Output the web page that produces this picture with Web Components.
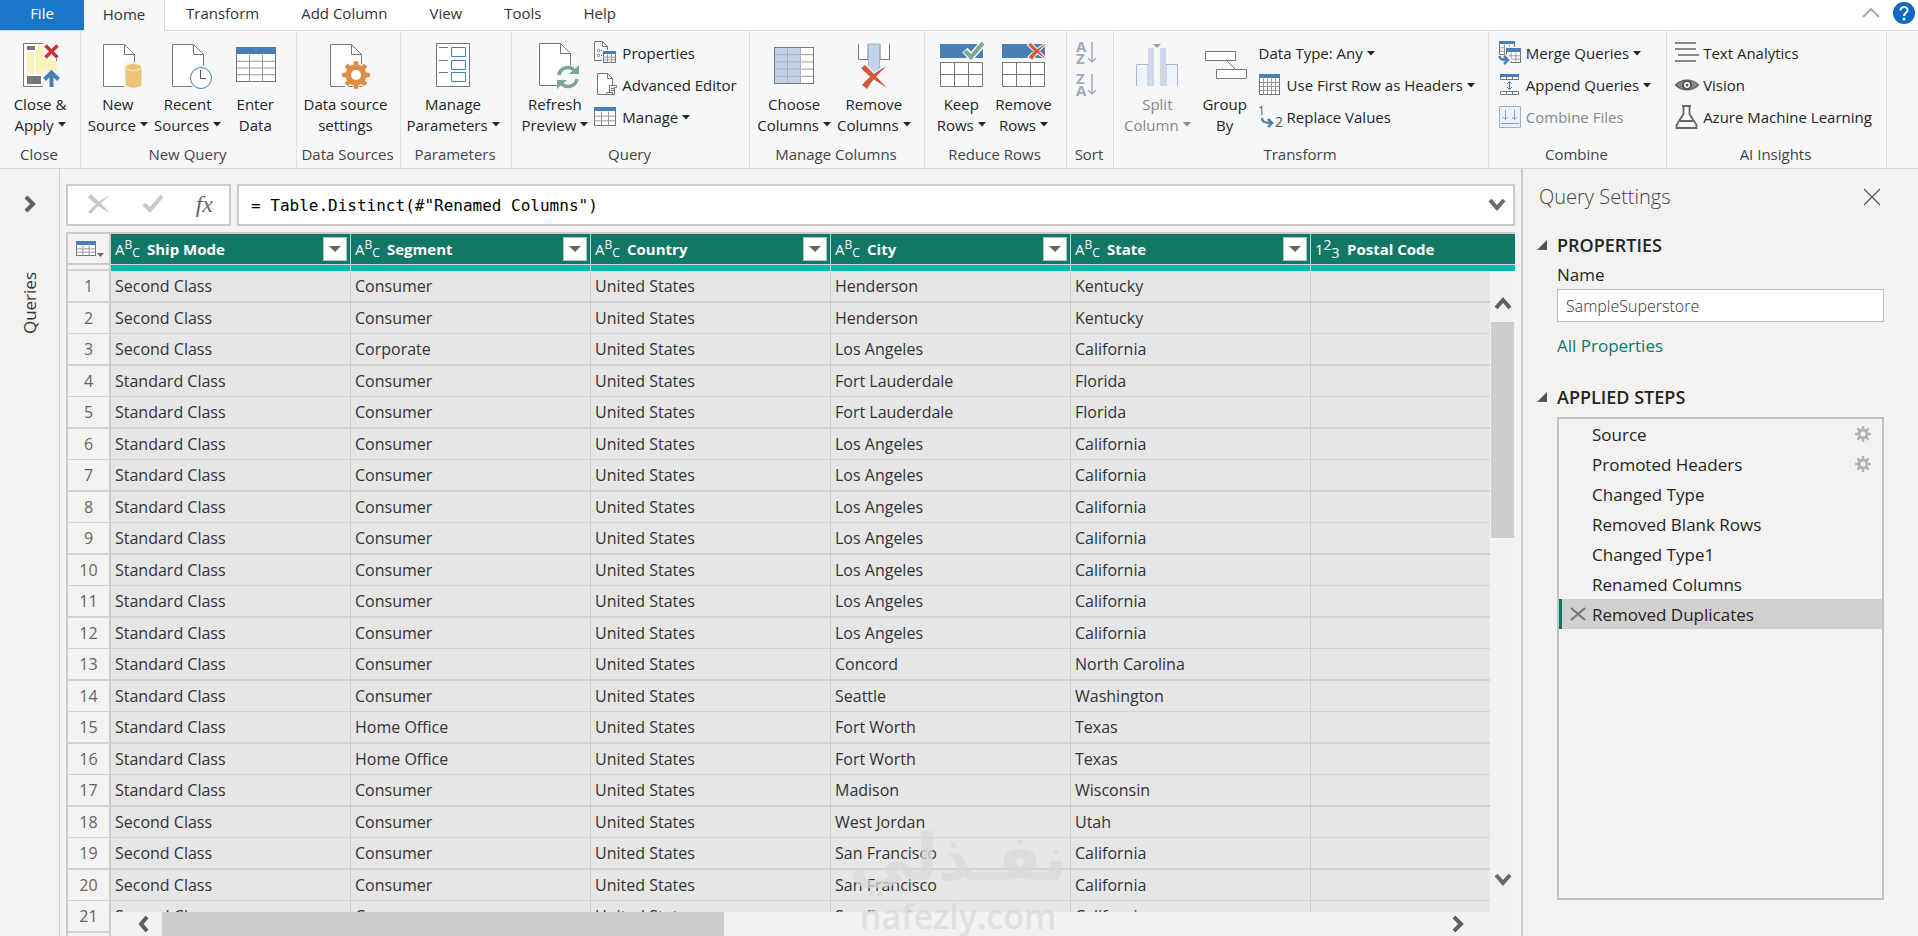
<!DOCTYPE html>
<html lang="en">
<head>
<meta charset="utf-8">
<title>Power Query Editor</title>
<style>
  html, body {
    margin: 0;
    height: 100%;
  }
  body {
    overflow: hidden;
    background: #f3f2f1;
    color: #252423;
    font-family: "Open Sans", "Noto Sans", sans-serif;
    font-size: 15px;
  }
</style>
</head>
<body>
<pq-app></pq-app>

<script>
const BLUE = '#4a7fb5';
const GREY = '#777';

// page with a folded corner
function page(x, y, w = 31, h = 42, f = 10) {
  return `<path d="M${x} ${y}h${w - f}l${f} ${f}v${h - f}h-${w}z" fill="#fff" stroke="${GREY}"/>
    <path d="M${x + w - f} ${y}v${f}h${f}" fill="none" stroke="${GREY}"/>`;
}

function grid(x, y, w, h, cols, rows, head = 0, fill = '#fff', line = '#999') {
  let d = '';
  for (let i = 1; i < cols; i++) d += `M${x + w * i / cols} ${y + head}v${h - head}`;
  for (let i = 1; i < rows; i++) d += `M${x} ${y + head + (h - head) * i / rows}h${w}`;
  return `<rect x="${x}" y="${y}" width="${w}" height="${h}" fill="${fill}"/>
    <path d="${d}" stroke="${line}" fill="none"/>
    <rect x="${x}" y="${y}" width="${w}" height="${h}" fill="none" stroke="${GREY}"/>
    ${head ? `<rect x="${x - .5}" y="${y - .5}" width="${w + 1}" height="${head}" fill="${BLUE}"/>` : ''}`;
}

function gear(cx, cy, outer, inner, teeth, hole, color, bg) {
  const pts = [];
  const step = Math.PI * 2 / teeth;
  for (let i = 0; i < teeth; i++) {
    [[-.31, inner], [-.19, outer], [.19, outer], [.31, inner]].forEach(([k, r]) => {
      const a = (i + k) * step - Math.PI / 2;
      pts.push((cx + r * Math.cos(a)).toFixed(1) + ',' + (cy + r * Math.sin(a)).toFixed(1));
    });
  }
  return `<polygon points="${pts.join(' ')}" fill="${color}"/><circle cx="${cx}" cy="${cy}" r="${hole}" fill="${bg}"/>`;
}

const BRUSH_X = (x, y, s, halo) => `<g transform="translate(${x} ${y}) scale(${s})">
  <path d="M0 3L4 0C9 5 17 13 26 23C17 17 8 12 0 3zM1 20C8 12 16 6 26 1C18 8 11 15 6 24z" fill="#d4593a"
    stroke="${halo}" stroke-width="3" paint-order="stroke"/></g>`;

const SORT = (a, b) => `<text x="0" y="11" font-size="15" font-weight="700" fill="#a0a9be">${a}</text>
  <text x="0" y="23" font-size="15" font-weight="700" fill="#a0a9be">${b}</text>
  <path d="M16 1v20M12 17l4 4 4-4" stroke="#a0a9be" stroke-width="1.5" fill="none"/>`;

// [width, height, markup]
const ICONS = {
  closeApply: [48, 46, `
    <path d="M40.500 17v8M28 1.500H7.500v43H27" fill="none" stroke="${GREY}"/>
    <rect x="8" y="2" width="32" height="42" fill="#fff"/>
    <rect x="11" y="4" width="8" height="4" fill="${GREY}"/>
    <path d="M11 10h7v22h-7zM20 4h9l7 15h5v9l-8 4H20z" fill="#fdf2b8"/>
    <rect x="11" y="34" width="14" height="8" fill="${GREY}"/>
    <path d="M27 0h16v17H27zM27 29h16v17H27z" fill="#f5f7f9"/>
    <path d="M29.500 3.500l12 12M41.500 3.500l-12 12" stroke="#c9352f" stroke-width="3.500"/>
    <path d="M35.500 45V31M28.500 37.500l7-7 7 7" fill="none" stroke="${BLUE}" stroke-width="4"/>`],
  newSource: [48, 46, page(9.5, 2.5) + `
    <path d="M30 20h19v26H30z" fill="#f5f7f9"/>
    <path d="M31.500 25v17c0 5 16 5 16 0V25z" fill="#eac577"/>
    <ellipse cx="39.500" cy="25" rx="8" ry="3.500" fill="#eac577" stroke="#fbf1da"/>`],
  recent: [48, 46, page(8.5, 2.5) + `
    <circle cx="37" cy="36" r="12.500" fill="#f5f7f9"/>
    <circle cx="37" cy="36" r="10.500" fill="#fff" stroke="${BLUE}"/>
    <path d="M36.500 28v8.500H42" fill="none" stroke="#555"/>`],
  table: [48, 46, grid(5.5, 5.5, 39, 34, 3, 4, 7)],
  dataSource: [48, 46, page(8.5, 2.5) + gear(34, 33, 16, 12, 8, 5, '#f5f7f9', '#f5f7f9') +
    gear(34, 33, 14, 10.5, 8, 5, '#e08c45', '#fff')],
  params: [48, 46, `
    <rect x="7.500" y="1.500" width="33" height="43" fill="#fff" stroke="${GREY}"/>
    <path d="M10 5.500h9M10 18.500h9M10 30.500h9" stroke="${GREY}"/>
    <path d="M22.500 5.500h14v9h-14zM22.500 18.500h14v9h-14zM22.500 30.500h14v9h-14z" fill="#fff" stroke="${BLUE}"/>`],
  refresh: [48, 46, page(8.5, 1.5) + `
    <circle cx="37" cy="35" r="12" fill="#f5f7f9"/>
    <path d="M28 33a9 9 0 0 1 16-4M46 37a9 9 0 0 1-16 4" fill="none" stroke="#7aa893" stroke-width="3.500"/>
    <path d="M48 23v9h-10zM26 47v-9h10z" fill="#7aa893"/>`],
  chooseCols: [48, 46, grid(4.5, 5.5, 39, 36, 3, 5) + '<path d="M5 6h26v35H5z" fill="#a9bfdb" opacity=".7"/>'],
  removeCols: [48, 46, `
    <path d="M8.500 2v15.500H18V2M30 2v15.500h9.500V2" fill="#fff" stroke="${GREY}"/>
    <path d="M18.500 2h11v28h-11z" fill="#c5d3e8" stroke="#a3b6cf"/>` + BRUSH_X(11, 23, 1, '#f5f7f9')],
  keepRows: [48, 46, `<path d="M3 2h43v14H3z" fill="${BLUE}"/>` + grid(3.5, 20.5, 42, 24, 3, 2, 0, '#fff', GREY) + `
    <path d="M28 8l6 7L46 1" fill="none" stroke="#f5f7f9" stroke-width="7"/>
    <path d="M28 9l6 6L46 1" fill="none" stroke="#7aa893" stroke-width="4"/>`],
  removeRows: [48, 46, `<path d="M3 2h43v14H3z" fill="${BLUE}"/>` + grid(3.5, 20.5, 42, 24, 3, 2, 0, '#fff', GREY) +
    BRUSH_X(29, 1, .7, '#f5f7f9')],
  splitCol: [48, 46, `
    <path d="M3.500 44V22.500H15V44M33 44V22.500h11.500V44" fill="#eef4fc" stroke="#a9b8d0"/>
    <path d="M15 6h6v38h-6zM27 6h6v38h-6z" fill="#cdd7e9"/>
    <path d="M20 2h8l-4 4z" fill="#9aa3b3"/>`],
  groupBy: [48, 46, `
    <path d="M26 19l8 8" stroke="${GREY}"/>
    <path d="M4.500 9.500h30v9h-30zM15.500 27.500h30v9h-30z" fill="#fff" stroke="${GREY}"/>`],
  properties: [24, 24, page(.5, .5, 13, 19, 5) + `
    <circle cx="4.500" cy="9.500" r="1.200" fill="none" stroke="${GREY}"/><circle cx="4.500" cy="14.500" r="1.200" fill="none" stroke="${GREY}"/>
    <path d="M7 9.500h1M7 14.500h1" stroke="${GREY}"/><path d="M8 9h15v14H8z" fill="#f5f7f9"/>` + grid(9.5, 10.5, 12, 11, 3, 3, 3)],
  advanced: [24, 24, page(3.5, .5, 15, 21, 5) + `
    <path d="M13 12h10v12H13z" fill="#f5f7f9"/>
    <path d="M15.500 19.500v-7h7v2h-2v7h-8v-2h6v2M17 15.500h3M17 17.500h3" fill="none" stroke="${GREY}"/>`],
  manage: [24, 24, grid(.5, 2.5, 21, 18, 3, 3, 4)],
  sortAsc: [22, 24, SORT('A', 'Z')],
  sortDesc: [22, 24, SORT('Z', 'A')],
  firstRow: [24, 24, grid(.5, 1.5, 20, 20, 5, 4, 4) + '<path d="M4.500 1v4M8.500 1v4M12.500 1v4M16.500 1v4" stroke="#777"/>'],
  replace: [24, 24, `
    <text x="-1" y="10" font-size="12" fill="#555">1</text><text x="16" y="22" font-size="14" fill="#555">2</text>
    <path d="M3 13c0 4 3 5 9 5M9 14l4 4-4 4" fill="none" stroke="${BLUE}" stroke-width="2.500"/>`],
  merge: [24, 24, grid(1.5, .5, 15, 13, 3, 3, 3) + '<path d="M7 6h17v17H7z" fill="#f5f7f9"/>' + grid(8.5, 7.5, 14, 14, 3, 3, 4) + `
    <path d="M2 14c0 4 3 5 8 5M7 15l4 4-4 4" fill="none" stroke="#f5f7f9" stroke-width="5"/>
    <path d="M1.500 15c0 3 3 4 8 4M6 15l4 4-4 4" fill="none" stroke="${BLUE}" stroke-width="2.500"/>`],
  append: [24, 24, `
    <path d="M2.500 1.500h18v5h-18zM8.500 4v3M14.500 4v3" fill="#fff" stroke="${GREY}"/>
    <path d="M2 1h19v3H2z" fill="${BLUE}"/>
    <path d="M2.500 18.500h18v3h-18zM8.500 18v3M14.500 18v3" fill="#fff" stroke="${GREY}"/>
    <path d="M11.500 9v7M9 11l2.500-2.500L14 11M9 14l2.500 2.500L14 14" fill="none" stroke="${BLUE}"/>`],
  combine: [24, 24, `
    <path d="M1.500 1.500h21v21h-21z" fill="#e9f1fb" stroke="#9fb0cb"/>
    <path d="M3 18.500h18M7.500 5v9M5 12l2.500 2.500L10 12M16.500 5v9M14 12l2.500 2.500L19 12" fill="none" stroke="#8d9db8"/>`],
  text: [24, 24, '<path d="M0 2h21M0 8h21M3 14h21M0 20h21" stroke="#666" stroke-width="1.500"/>'],
  vision: [24, 24, `
    <path d="M1 12C7 6 17 6 23 12C17 18 7 18 1 12z" fill="#fff" stroke="#666" stroke-width="2"/>
    <path d="M2 12l6-4v8zM22 12l-6-4v8z" fill="#888"/>
    <circle cx="12" cy="12" r="4" fill="#fff" stroke="#555" stroke-width="2"/><circle cx="12" cy="12" r="1.500" fill="#555"/>`],
  flask: [24, 24, `
    <path d="M7 1h9M8.500 1v8L1.500 20v3h20v-3L14.500 9V1M5 16h13" fill="none" stroke="#666" stroke-width="1.800"/>`],
  caret: [8, 5, '<path d="M0 0h8L4 4.500z" fill="currentColor"/>'],
  drop: [12, 6, '<path d="M0 0h12L6 6z" fill="currentColor"/>'],
  help: [22, 22, `<circle cx="11" cy="11" r="11" fill="#0e68c4"/>
    <path d="M7.500 8.500C7.500 3.500 15 4 14.500 8.500C14 11 11 11 11 14" fill="none" stroke="#fff" stroke-width="2"/>
    <circle cx="11" cy="17" r="1.500" fill="#fff"/>`],
  collapse: [18, 10, '<path d="M1 9l8-8 8 8" fill="none" stroke="#aaa" stroke-width="2"/>'],
  right: [12, 16, '<path d="M2 1l7 7-7 7" fill="none" stroke="#5f5f5f" stroke-width="4"/>'],
  left: [12, 16, '<path d="M10 1L4 8l6 7" fill="none" stroke="#5f5f5f" stroke-width="4"/>'],
  down: [18, 14, '<path d="M2 2l7 8 7-8" fill="none" stroke="#6a6a6a" stroke-width="4"/>'],
  up: [18, 14, '<path d="M2 12l7-8 7 8" fill="none" stroke="#5f5f5f" stroke-width="4"/>'],
  cancel: [24, 20, '<path d="M1 3l3-3C10 6 16 11 23 19C14 14 7 10 1 3zM1 18C8 10 15 5 23 1C16 7 9 13 4 20z" fill="#c8c8c8"/>'],
  check: [22, 18, '<path d="M2 9l6 6L20 1" fill="none" stroke="#c8c8c8" stroke-width="4"/>'],
  close: [16, 16, '<path d="M0 0l16 16M16 0L0 16" stroke="#555" stroke-width="1.200"/>'],
  remove: [16, 16, '<path d="M1 2l14 12M15 2L1 14" stroke="#777" stroke-width="2.200"/>'],
  gear: [16, 16, gear(8, 8, 8, 5.5, 8, 2.5, '#b3b3b3', '#f3f2f1')],
  expanded: [10, 10, '<path d="M10 0v10H0z" fill="#555"/>'],
  corner: [28, 20, grid(.5, 2.5, 19, 14, 3, 3, 4) + '<path d="M21 14h7l-3.500 4z" fill="#666"/>'],
};

class PqIcon extends HTMLElement {
  connectedCallback() {
    const [w, h, body] = ICONS[this.getAttribute('name')];
    this.attachShadow({mode: 'open'}).innerHTML = `
      <style>
        :host { display: inline-block; flex: none; line-height: 0; }
        svg { display: block; overflow: visible; }
      </style>
      <svg width="${w}" height="${h}" viewBox="0 0 ${w} ${h}" aria-hidden="true">${body}</svg>`;
  }
}
customElements.define('pq-icon', PqIcon);

// Large ribbon button: icon on top, two lines of text
class PqBigButton extends HTMLElement {
  connectedCallback() {
    const caret = this.hasAttribute('menu') ? '<pq-icon class="caret" name="caret"></pq-icon>' : '';
    this.attachShadow({mode: 'open'}).innerHTML = `
      <style>
        :host { display: block; padding-top: 11px; }
        button {
          display: flex; flex-direction: column; align-items: center; gap: 6px;
          min-width: 62px; padding: 0 3px; border: 0; background: none;
          font: inherit; line-height: 21px; color: #252423; white-space: nowrap;
        }
        :host([disabled]) button { color: #8a8886; }
        .caret { margin-left: 4px; vertical-align: 4px; }
      </style>
      <button type="button" ${this.hasAttribute('disabled') ? 'disabled' : ''}>
        <pq-icon name="${this.getAttribute('icon')}"></pq-icon>
        <span><slot></slot>${caret}</span>
      </button>`;
  }
}
customElements.define('pq-big-button', PqBigButton);

class PqSmallButton extends HTMLElement {
  connectedCallback() {
    const icon = this.getAttribute('icon');
    this.attachShadow({mode: 'open'}).innerHTML = `
      <style>
        :host { display: block; }
        button {
          display: flex; align-items: center; gap: 4px; height: 32px;
          padding: 0; border: 0; background: none;
          font: inherit; color: #252423; white-space: nowrap;
        }
        :host([disabled]) button { color: #8a8886; }
      </style>
      <button type="button" ${this.hasAttribute('disabled') ? 'disabled' : ''} aria-label="${this.getAttribute('label') || this.textContent}">
        ${icon ? `<pq-icon name="${icon}"></pq-icon>` : ''}
        <slot></slot>
        ${this.hasAttribute('menu') ? '<pq-icon name="caret"></pq-icon>' : ''}
      </button>`;
  }
}
customElements.define('pq-small-button', PqSmallButton);

class PqGroup extends HTMLElement {
  connectedCallback() {
    this.attachShadow({mode: 'open'}).innerHTML = `
      <style>
        :host { display: flex; flex-direction: column; flex: none; box-sizing: border-box; border-right: 1px solid #dfe2e5; }
        .items { display: flex; justify-content: center; height: 113px; padding-right: 6px; }
        :host(.close) .items { padding-right: 0; }
        .label { text-align: center; line-height: 20px; color: #444; padding: 0 2px 4px 0; white-space: nowrap; }
        ::slotted(.stack) { padding-top: 6px; }
        ::slotted(.beside) { padding-left: 3px; }
      </style>
      <div class="items"><slot></slot></div>
      <div class="label">${this.getAttribute('label')}</div>`;
  }
}
customElements.define('pq-group', PqGroup);

class PqTabs extends HTMLElement {
  connectedCallback() {
    this.attachShadow({mode: 'open'}).innerHTML = `
      <style>
        :host { display: flex; align-items: stretch; height: 30px; background: #fff; border-bottom: 1px solid #d5d8db; }
        button {
          padding: 0 21px 4px; border: 0; background: none; font: inherit; color: #333;
        }
        .file { width: 84px; background: #1976c8; color: #fff; }
        .home { width: 81px; padding: 0 0 4px; margin-bottom: -1px; background: #f5f7f9; border-right: 1px solid #d5d8db; }
        .right { display: flex; align-items: center; gap: 13px; margin-left: auto; padding: 0 3px 4px 0; }
        .right button { display: flex; padding: 0; }
      </style>
      <button type="button" class="file">File</button>
      <button type="button" class="home">Home</button>
      <button type="button">Transform</button>
      <button type="button">Add Column</button>
      <button type="button">View</button>
      <button type="button">Tools</button>
      <button type="button">Help</button>
      <div class="right">
        <button type="button" aria-label="Collapse ribbon"><pq-icon name="collapse"></pq-icon></button>
        <button type="button" aria-label="Help"><pq-icon name="help"></pq-icon></button>
      </div>`;
  }
}
customElements.define('pq-tabs', PqTabs);

class PqRibbon extends HTMLElement {
  connectedCallback() {
    this.attachShadow({mode: 'open'}).innerHTML = `
      <style>
        :host { display: flex; background: #f5f7f9; border-bottom: 1px solid #d5d8db; overflow: hidden; }
        .close { width: 81px; }
        .new { width: 216px; }
        .sources { width: 104px; }
        .params { width: 111px; }
        .query { width: 238px; }
        .columns { width: 175px; }
        .rows { width: 142px; }
        .sort { width: 47px; }
        .transform { width: 375px; }
        .combine { width: 178px; }
        .ai { width: 220px; }
      </style>
      <pq-group class="close" label="Close">
        <pq-big-button icon="closeApply" menu>Close &amp;<br>Apply</pq-big-button>
      </pq-group>
      <pq-group class="new" label="New Query">
        <pq-big-button icon="newSource" menu>New<br>Source</pq-big-button>
        <pq-big-button icon="recent" menu>Recent<br>Sources</pq-big-button>
        <pq-big-button icon="table">Enter<br>Data</pq-big-button>
      </pq-group>
      <pq-group class="sources" label="Data Sources">
        <pq-big-button icon="dataSource">Data source<br>settings</pq-big-button>
      </pq-group>
      <pq-group class="params" label="Parameters">
        <pq-big-button icon="params" menu>Manage<br>Parameters</pq-big-button>
      </pq-group>
      <pq-group class="query" label="Query">
        <pq-big-button icon="refresh" menu>Refresh<br>Preview</pq-big-button>
        <div class="stack beside">
          <pq-small-button icon="properties">Properties</pq-small-button>
          <pq-small-button icon="advanced">Advanced Editor</pq-small-button>
          <pq-small-button icon="manage" menu>Manage</pq-small-button>
        </div>
      </pq-group>
      <pq-group class="columns" label="Manage Columns">
        <pq-big-button icon="chooseCols" menu>Choose<br>Columns</pq-big-button>
        <pq-big-button icon="removeCols" menu>Remove<br>Columns</pq-big-button>
      </pq-group>
      <pq-group class="rows" label="Reduce Rows">
        <pq-big-button icon="keepRows" menu>Keep<br>Rows</pq-big-button>
        <pq-big-button icon="removeRows" menu>Remove<br>Rows</pq-big-button>
      </pq-group>
      <pq-group class="sort" label="Sort">
        <div class="stack">
          <pq-small-button icon="sortAsc" label="Sort ascending" disabled></pq-small-button>
          <pq-small-button icon="sortDesc" label="Sort descending" disabled></pq-small-button>
        </div>
      </pq-group>
      <pq-group class="transform" label="Transform">
        <pq-big-button icon="splitCol" menu disabled>Split<br>Column</pq-big-button>
        <pq-big-button icon="groupBy">Group<br>By</pq-big-button>
        <div class="stack beside">
          <pq-small-button menu>Data Type: Any</pq-small-button>
          <pq-small-button icon="firstRow" menu>Use First Row as Headers</pq-small-button>
          <pq-small-button icon="replace">Replace Values</pq-small-button>
        </div>
      </pq-group>
      <pq-group class="combine" label="Combine">
        <div class="stack">
          <pq-small-button icon="merge" menu>Merge Queries</pq-small-button>
          <pq-small-button icon="append" menu>Append Queries</pq-small-button>
          <pq-small-button icon="combine" disabled>Combine Files</pq-small-button>
        </div>
      </pq-group>
      <pq-group class="ai" label="AI Insights">
        <div class="stack">
          <pq-small-button icon="text">Text Analytics</pq-small-button>
          <pq-small-button icon="vision">Vision</pq-small-button>
          <pq-small-button icon="flask">Azure Machine Learning</pq-small-button>
        </div>
      </pq-group>`;
  }
}
customElements.define('pq-ribbon', PqRibbon);

class PqQueriesPane extends HTMLElement {
  connectedCallback() {
    this.attachShadow({mode: 'open'}).innerHTML = `
      <style>
        :host {
          display: flex; flex-direction: column; align-items: center; gap: 60px;
          box-sizing: border-box; width: 60px; padding-top: 27px; border-right: 1px solid #d2d0ce;
        }
        button { display: flex; padding: 0; border: 0; background: none; }
        span { writing-mode: vertical-rl; transform: rotate(180deg); font-size: 17px; line-height: 22px; color: #333; }
      </style>
      <button type="button" aria-label="Expand queries"><pq-icon name="right"></pq-icon></button>
      <span>Queries</span>`;
  }
}
customElements.define('pq-queries-pane', PqQueriesPane);

class PqFormulaBar extends HTMLElement {
  connectedCallback() {
    this.attachShadow({mode: 'open'}).innerHTML = `
      <style>
        :host { display: flex; gap: 6px; }
        div { display: flex; align-items: center; box-sizing: border-box; height: 42px; border: 2px solid #cdcbc9; background: #fff; }
        .actions { width: 165px; justify-content: space-between; padding: 0 16px 2px 19px; }
        .formula { flex: 1; padding: 0 7px 0 12px; }
        button { display: flex; padding: 0; border: 0; background: none; }
        .fx { font: italic 24px/30px "Liberation Serif", serif; color: #666; }
        input {
          flex: 1; min-width: 0; padding: 0; border: 0; outline: 0; background: none; color: #000;
          font: 16px "DejaVu Sans Mono", monospace;
        }
      </style>
      <div class="actions">
        <button type="button" aria-label="Cancel"><pq-icon name="cancel"></pq-icon></button>
        <button type="button" aria-label="Commit"><pq-icon name="check"></pq-icon></button>
        <button type="button" class="fx">fx</button>
      </div>
      <div class="formula">
        <input type="text" aria-label="Formula" spellcheck="false" value='= Table.Distinct(#"Renamed Columns")'>
        <button type="button" aria-label="Expand formula bar"><pq-icon name="down"></pq-icon></button>
      </div>`;
  }
}
customElements.define('pq-formula-bar', PqFormulaBar);

class PqDataGrid extends HTMLElement {
  constructor() {
    super();
    this._columns = ['Ship Mode', 'Segment', 'Country', 'City', 'State', 'Postal Code'];
    // ship mode, segment, city, state
    this._rows = [
      ['Second', 'Consumer', 'Henderson', 'Kentucky'],
      ['Second', 'Consumer', 'Henderson', 'Kentucky'],
      ['Second', 'Corporate', 'Los Angeles', 'California'],
      ['Standard', 'Consumer', 'Fort Lauderdale', 'Florida'],
      ['Standard', 'Consumer', 'Fort Lauderdale', 'Florida'],
      ['Standard', 'Consumer', 'Los Angeles', 'California'],
      ['Standard', 'Consumer', 'Los Angeles', 'California'],
      ['Standard', 'Consumer', 'Los Angeles', 'California'],
      ['Standard', 'Consumer', 'Los Angeles', 'California'],
      ['Standard', 'Consumer', 'Los Angeles', 'California'],
      ['Standard', 'Consumer', 'Los Angeles', 'California'],
      ['Standard', 'Consumer', 'Los Angeles', 'California'],
      ['Standard', 'Consumer', 'Concord', 'North Carolina'],
      ['Standard', 'Consumer', 'Seattle', 'Washington'],
      ['Standard', 'Home Office', 'Fort Worth', 'Texas'],
      ['Standard', 'Home Office', 'Fort Worth', 'Texas'],
      ['Standard', 'Consumer', 'Madison', 'Wisconsin'],
      ['Second', 'Consumer', 'West Jordan', 'Utah'],
      ['Second', 'Consumer', 'San Francisco', 'California'],
      ['Second', 'Consumer', 'San Francisco', 'California'],
      ['Second', 'Consumer', 'San Francisco', 'California'],
    ];
  }

  connectedCallback() {
    this.attachShadow({mode: 'open'}).innerHTML = `
      <style>
        :host {
          position: relative; display: grid; overflow: hidden;
          grid-template: 37px minmax(0, 1fr) 24px / 43px minmax(0, 1fr) 25px;
          border: 2px solid #cdcbc9; border-right: 0; border-bottom: 0;
        }
        .view { grid-area: 1 / 1 / 4 / 4; overflow: hidden; min-width: 0; min-height: 0; }
        table { width: 1483px; table-layout: fixed; border-collapse: separate; border-spacing: 0; font-size: 16px; }
        col { width: 240px; }
        col:first-child { width: 43px; }
        th, td { box-sizing: border-box; padding: 0; text-align: left; white-space: nowrap; }
        thead th { height: 31px; background: #117865; border-right: 1px solid #c8dcd8; border-bottom: 1px solid #c8dcd8; color: #fff; font-size: 15px; font-weight: 700; }
        thead th.corner { background: #f3f2f1; border-right: 2px solid #cdcbc9; border-bottom: 2px solid #cdcbc9; }
        thead td { height: 6px; background: #01b8aa; border-right: 1px solid #c8dcd8; }
        thead td:first-child { background: #f3f2f1; border-right: 2px solid #cdcbc9; border-bottom: 2px solid #d5d3d1; }
        .head { display: flex; align-items: center; height: 30px; padding: 0 3px 0 4px; }
        .corner pq-icon { display: flex; margin-left: 8px; }
        .type { display: flex; align-items: center; width: 32px; font-weight: 400; font-size: 15px; line-height: 16px; }
        .type sup, .type sub { vertical-align: baseline; font-size: 12px; line-height: 12px; }
        .type sup { padding-bottom: 8px; }
        .type sub { padding-top: 8px; }
        .num sup, .num sub { font-size: 14px; }
        .head button {
          display: flex; align-items: center; justify-content: center; width: 24px; height: 24px; margin-left: auto;
          padding: 0; border: 1px solid #a9c9c2; background: #fff; color: #666;
        }
        tbody td, tbody th { height: 32px; line-height: 28px; background: #e6e6e6; border-right: 1px solid #cfcfcf; border-bottom: 2px solid #d2d2d2; }
        tbody tr:nth-child(even) > * { height: 31px; border-bottom-width: 1px; }
        tbody td { padding: 0 4px; color: #333; }
        tbody tr > th { background: #f3f2f1; border-right: 2px solid #cdcbc9; text-align: center; font-weight: 400; color: #666; }
        .bar { background: #f1f1f0; display: flex; align-items: center; }
        .bar button { display: flex; padding: 0; border: 0; background: none; }
        .v { grid-area: 2 / 3; flex-direction: column; padding: 25px 0; }
        .v .thumb { width: 23px; height: 216px; margin: 12px 0 auto; background: #cdcdcd; }
        .h { grid-area: 3 / 2 / 4 / 4; padding: 0 51px 0 26px; }
        .h .thumb { width: 562px; height: 24px; margin: 0 auto 0 13px; background: #cdcdcd; }
        .mark {
          position: absolute; right: 448px; bottom: -2px; pointer-events: none; text-align: center;
          color: #d9d9d9; opacity: .75; font-weight: 600; font-size: 34px; line-height: 44px;
        }
        .mark b { display: block; font: 700 64px/72px "DejaVu Sans", sans-serif; }
      </style>
      <div class="view">
        <table>
          <colgroup>${'<col>'.repeat(7)}</colgroup>
          <thead>
            <tr><th class="corner"><pq-icon name="corner"></pq-icon></th>${this._columns.map((c, i) => this._head(c, i)).join('')}</tr>
            <tr>${'<td></td>'.repeat(7)}</tr>
          </thead>
          <tbody>${this._rows.map((r, i) => this._row(r, i)).join('')}<tr><th></th>${'<td></td>'.repeat(6)}</tr></tbody>
        </table>
      </div>
      <div class="bar v">
        <button type="button" aria-label="Scroll up"><pq-icon name="up"></pq-icon></button>
        <div class="thumb"></div>
        <button type="button" aria-label="Scroll down"><pq-icon name="down"></pq-icon></button>
      </div>
      <div class="bar h">
        <button type="button" aria-label="Scroll left"><pq-icon name="left"></pq-icon></button>
        <div class="thumb"></div>
        <button type="button" aria-label="Scroll right"><pq-icon name="right"></pq-icon></button>
      </div>
      <div class="mark"><b lang="ar">نفـذلي</b>nafezly.com</div>`;
  }

  _head(name, i) {
    const type = i < 5 ? '<span class="type">A<sup>B</sup><sub>C</sub></span>' : '<span class="type num">1<sup>2</sup><sub>3</sub></span>';
    return `<th><div class="head">${type}${name}
      <button type="button" aria-label="Filter ${name}"><pq-icon name="drop"></pq-icon></button></div></th>`;
  }

  _row([mode, segment, city, state], i) {
    return `<tr><th>${i + 1}</th><td>${mode} Class</td><td>${segment}</td><td>United States</td><td>${city}</td><td>${state}</td><td></td></tr>`;
  }
}
customElements.define('pq-data-grid', PqDataGrid);

class PqSettings extends HTMLElement {
  constructor() {
    super();
    this._steps = ['Source', 'Promoted Headers', 'Changed Type', 'Removed Blank Rows', 'Changed Type1', 'Renamed Columns', 'Removed Duplicates'];
  }

  connectedCallback() {
    this.attachShadow({mode: 'open'}).innerHTML = `
      <style>
        :host {
          display: flex; flex-direction: column; box-sizing: border-box; width: 397px; flex: none;
          padding: 14px 34px 36px 14px; border-left: 2px solid #cdcbc9; font-size: 17px;
        }
        header { display: flex; align-items: center; justify-content: space-between; padding: 0 4px 0 2px; }
        h2 { margin: 0; font-size: 20px; font-weight: 300; line-height: 28px; color: #444; }
        h3 { display: flex; align-items: center; gap: 10px; margin: 0; font-size: 18px; font-weight: 600; line-height: 24px; }
        button { display: flex; padding: 0; border: 0; background: none; font: inherit; color: inherit; }
        .props { padding: 22px 0 27px; }
        .fields { display: flex; flex-direction: column; align-items: flex-start; padding-left: 20px; }
        label { line-height: 24px; margin: 6px 0 2px; }
        input {
          box-sizing: border-box; width: 100%; height: 33px; padding: 0 8px; border: 1px solid #bebcba;
          background: #fff; font: 300 16px "Open Sans", sans-serif; color: #333;
        }
        a { margin-top: 12px; line-height: 24px; color: #117865; text-decoration: none; }
        ul { flex: 1; margin: 8px 0 0 20px; padding: 0; border: 2px solid #c3c1bf; list-style: none; overflow: hidden; }
        li { display: flex; align-items: center; box-sizing: border-box; height: 30px; padding: 0 11px 0 33px; }
        .edit { margin-left: auto; }
        .on { background: #d2d0ce; border-left: 3px solid #117865; padding-left: 8px; gap: 6px; }
      </style>
      <header>
        <h2>Query Settings</h2>
        <button type="button" aria-label="Close"><pq-icon name="close"></pq-icon></button>
      </header>
      <section class="props">
        <h3><pq-icon name="expanded"></pq-icon>PROPERTIES</h3>
        <div class="fields">
          <label for="name">Name</label>
          <input id="name" type="text" value="SampleSuperstore">
          <a href="#">All Properties</a>
        </div>
      </section>
      <h3><pq-icon name="expanded"></pq-icon>APPLIED STEPS</h3>
      <ul>${this._steps.map((s, i) => this._step(s, i)).join('')}</ul>`;
  }

  _step(name, i) {
    if (i === this._steps.length - 1) {
      return `<li class="on"><button type="button" aria-label="Delete step"><pq-icon name="remove"></pq-icon></button>${name}</li>`;
    }
    return `<li>${name}${i < 2 ? '<button type="button" class="edit" aria-label="Edit settings"><pq-icon name="gear"></pq-icon></button>' : ''}</li>`;
  }
}
customElements.define('pq-settings', PqSettings);

class PqApp extends HTMLElement {
  connectedCallback() {
    this.attachShadow({mode: 'open'}).innerHTML = `
      <style>
        :host { display: flex; flex-direction: column; height: 100vh; }
        main { display: flex; flex: 1; min-height: 0; }
        .center { display: flex; flex-direction: column; gap: 6px; flex: 1; min-width: 0; padding: 15px 6px 0 6px; }
        pq-data-grid { flex: 1; min-height: 0; }
      </style>
      <pq-tabs></pq-tabs>
      <pq-ribbon></pq-ribbon>
      <main>
        <pq-queries-pane></pq-queries-pane>
        <div class="center">
          <pq-formula-bar></pq-formula-bar>
          <pq-data-grid></pq-data-grid>
        </div>
        <pq-settings></pq-settings>
      </main>`;
  }
}
customElements.define('pq-app', PqApp);
</script>
</body>
</html>
